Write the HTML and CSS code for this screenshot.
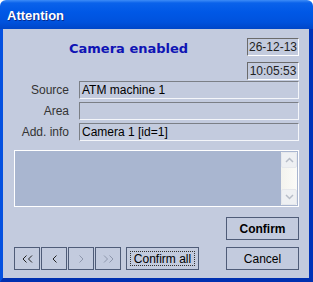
FILE: index.html
```html
<!doctype html>
<html>
<head>
    <meta charset="UTF-8"/>
    <title>Attention</title>
    <link rel="stylesheet" href="styles.css">
</head>
<body>
<div class="window">
    <div class="titlebar">Attention</div>
    <div class="frame">
        <div class="head">
            <div class="event">Camera enabled</div>
            <div class="stamps">
                <div class="stamp">26-12-13</div>
                <div class="stamp">10:05:53</div>
            </div>
        </div>
        <div class="form">
            <div class="label">Source</div>
            <div class="field">ATM machine 1</div>
            <div class="label">Area</div>
            <div class="field"></div>
            <div class="label">Add. info</div>
            <div class="field">Camera 1 [id=1]</div>
        </div>
        <div class="memo">
            <div class="scroll">
                <div class="sbtn"><svg width="9" height="6" viewBox="0 0 9 6"><path d="M1 5 L4.5 1.5 L8 5" fill="none" stroke="#b7bdc8" stroke-width="1.5"/></svg></div>
                <div class="strack"></div>
                <div class="sbtn"><svg width="9" height="6" viewBox="0 0 9 6"><path d="M1 1 L4.5 4.5 L8 1" fill="none" stroke="#b7bdc8" stroke-width="1.5"/></svg></div>
            </div>
        </div>
        <div class="row-confirm">
            <button class="btn bold">Confirm</button>
        </div>
        <div class="row-bottom">
            <div class="nav">
                <button class="nbtn"><svg width="11" height="8" viewBox="0 0 11 8"><path d="M4.5 0.5 L1 4 L4.5 7.5 M10 0.5 L6.5 4 L10 7.5" fill="none" stroke="#222" stroke-width="1"/></svg></button>
                <button class="nbtn"><svg width="5" height="8" viewBox="0 0 5 8"><path d="M4.5 0.5 L1 4 L4.5 7.5" fill="none" stroke="#222" stroke-width="1"/></svg></button>
                <button class="nbtn"><svg width="5" height="8" viewBox="0 0 5 8"><path d="M0.5 0.5 L4 4 L0.5 7.5" fill="none" stroke="#8d96ab" stroke-width="1"/></svg></button>
                <button class="nbtn"><svg width="11" height="8" viewBox="0 0 11 8"><path d="M1 0.5 L4.5 4 L1 7.5 M6.5 0.5 L10 4 L6.5 7.5" fill="none" stroke="#8d96ab" stroke-width="1"/></svg></button>
            </div>
            <button class="btn all"><span class="focus">Confirm all</span></button>
            <button class="btn">Cancel</button>
        </div>
    </div>
</div>
</body>
</html>
```
FILE: styles.css
```css
* {
    margin: 0;
    padding: 0;
    box-sizing: border-box;
}
body {
    width: 313px;
    height: 282px;
    overflow: hidden;
    font-family: "Liberation Sans", Arial, sans-serif;
    font-size: 12px;
}
.window {
    width: 313px;
    height: 282px;
    display: flex;
    flex-direction: column;
}
.titlebar {
    height: 29px;
    padding: 8px 0 0 7px;
    color: #fff;
    font-family: "Liberation Sans", Arial, sans-serif;
    font-weight: bold;
    font-size: 13px;
    line-height: 15px;
    text-shadow: 1px 1px #0a2a8a;
    background: linear-gradient(#3d8cf7 0, #0a62ea 3px, #0058e6 12px, #0052dd 22px, #0046c8 29px);
    border-radius: 6px 6px 0 0;
}
.frame {
    flex: 1;
    background: #c3cbde;
    border-left: 3px solid #0451e0;
    border-right: 4px solid #0032b8;
    border-bottom: 4px solid #0030b0;
    padding: 9px 10px 0 11px;
    display: flex;
    flex-direction: column;
}
.head {
    display: flex;
    justify-content: space-between;
    height: 43px;
}
.event {
    padding: 3px 0 0 55px;
    color: #0f14b4;
    font-family: "DejaVu Sans", Verdana, sans-serif;
    font-weight: bold;
    font-size: 13px;
}
.stamps {
    display: flex;
    flex-direction: column;
    gap: 6px;
}
.stamp {
    width: 52px;
    height: 18px;
    border: 1px solid;
    border-color: #6b6b6b #fff #fff #6b6b6b;
    text-align: center;
    line-height: 16px;
    font-size: 12px;
    color: #222;
}
.form {
    display: grid;
    grid-template-columns: 55px 1fr;
    column-gap: 10px;
    row-gap: 3px;
}
.label {
    text-align: right;
    line-height: 18px;
    color: #333;
}
.field {
    height: 18px;
    border: 1px solid;
    border-color: #7b7f86 #f4f6fa #f4f6fa #7b7f86;
    line-height: 16px;
    padding-left: 2px;
    color: #000;
}
.memo {
    margin-top: 9px;
    height: 57px;
    border: 1px solid #fff;
    background: #a9b6d0;
    display: flex;
    justify-content: flex-end;
    padding: 1px;
}
.scroll {
    width: 16px;
    display: flex;
    flex-direction: column;
    background: linear-gradient(90deg, #f3f3ee, #fbfbf8);
}
.sbtn {
    height: 16px;
    border: 1px solid #e6e8ec;
    border-radius: 2px;
    background: #eef0f3;
    display: flex;
    align-items: center;
    justify-content: center;
}
.strack {
    flex: 1;
}
.row-confirm {
    margin-top: 10px;
    display: flex;
    justify-content: flex-end;
}
.btn {
    width: 73px;
    height: 23px;
    border: 1px solid #4f5c78;
    background: #c3cbde;
    font-family: "Liberation Sans", Arial, sans-serif;
    font-size: 12px;
    color: #000;
}
.bold {
    font-weight: bold;
}
.row-bottom {
    margin-top: 7px;
    display: flex;
    align-items: center;
}
.nav {
    display: flex;
    gap: 1px;
}
.nbtn {
    width: 26px;
    height: 23px;
    border: 1px solid #4f5c78;
    background: #c3cbde;
    display: flex;
    align-items: center;
    justify-content: center;
}
.all {
    margin-left: 5px;
    padding: 3px;
}
.focus {
    display: block;
    height: 100%;
    border: 1px dotted #333;
    line-height: 14px;
}
.btn.all + .btn {
    margin-left: auto;
}
```
